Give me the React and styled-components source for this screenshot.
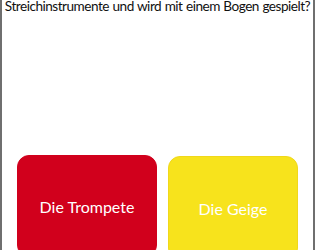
import React from "react";
import styled, { createGlobalStyle } from "styled-components";

const Global = createGlobalStyle`
  html, body { margin: 0; padding: 0; background: #ffffff; }
  body { width: 315px; height: 250px; overflow: hidden; }
`;

const Frame = styled.div`
  box-sizing: border-box;
  width: 315px;
  height: 250px;
  border-left: 2px solid #6f6f6f;
  border-right: 2px solid #6f6f6f;
  background: #ffffff;
  overflow: hidden;
  display: flex;
  flex-direction: column;
`;

const Question = styled.p`
  margin: -3px 0 0 0;
  font-family: Lato, "Open Sans", sans-serif;
  font-size: 13.6px;
  letter-spacing: -0.5px;
  word-spacing: 0.5px;
  line-height: 18px;
  color: #111111;
  text-align: center;
  white-space: nowrap;
`;

const Answers = styled.div`
  display: flex;
  align-items: flex-start;
  gap: 11px;
  padding: 140px 0 0 15px;
`;

const Answer = styled.button`
  box-sizing: border-box;
  width: ${(p) => p.$w}px;
  height: ${(p) => p.$h}px;
  margin-top: ${(p) => p.$top}px;
  flex: none;
  border: 1px solid ${(p) => p.$edge};
  border-radius: 12px;
  background: ${(p) => p.$bg};
  color: #ffffff;
  font-family: Lato, "Open Sans", sans-serif;
  font-size: 16px;
  display: flex;
  align-items: center;
  justify-content: center;
  padding: 0;
  cursor: pointer;
`;

export default function App() {
  return (
    <>
      <Global />
      <Frame>
        <Question>Streichinstrumente und wird mit einem Bogen gespielt?</Question>
        <Answers>
          <Answer $w={140} $h={102} $top={0} $bg="#d1001c" $edge="#d1001c">
            Die Trompete
          </Answer>
          <Answer $w={130} $h={104} $top={1} $bg="#f7e31c" $edge="#f0d81a">
            Die Geige
          </Answer>
        </Answers>
      </Frame>
    </>
  );
}
